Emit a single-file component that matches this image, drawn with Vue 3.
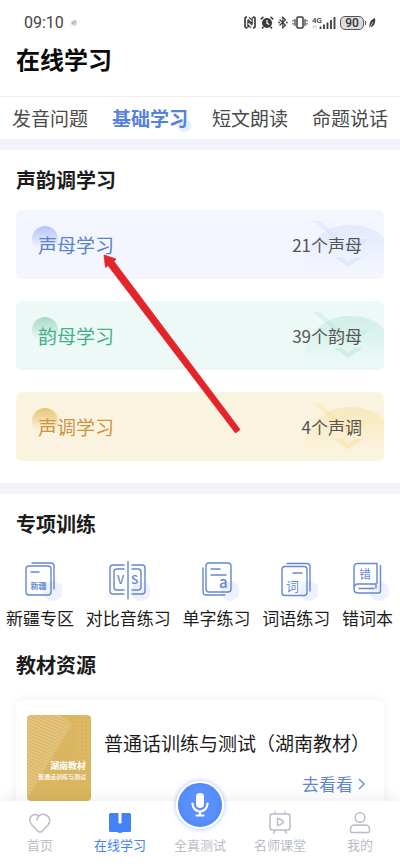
<script setup>
import { ref } from 'vue'

const tabs = ['发音问题', '基础学习', '短文朗读', '命题说话']
const activeTab = ref('基础学习')

const lessons = [
  { key: 'blue', name: '声母学习', count: '21个声母' },
  { key: 'green', name: '韵母学习', count: '39个韵母' },
  { key: 'gold', name: '声调学习', count: '4个声调' },
]

const drills = [
  { key: 'region', name: '新疆专区' },
  { key: 'versus', name: '对比音练习' },
  { key: 'letter', name: '单字练习' },
  { key: 'word', name: '词语练习' },
  { key: 'wrong', name: '错词本' },
]
</script>

<template>
  <div class="app">
    <div class="status">
      <span class="clock">09:10</span>
      <svg class="weather" width="8" height="8" viewBox="0 0 8 8">
        <circle cx="4" cy="4" r="3" fill="#d3d9da" />
        <path d="M2 3.500 4 4.500M4.500 1.500 6 3.500" stroke="#8d9799" stroke-width="1" />
      </svg>
      <div class="signals">
        <svg width="12" height="13" viewBox="0 0 12 13" fill="none" stroke="#3c3c3c">
          <path d="M3 1.200H2.300Q1 1.200 1 2.500v8q0 1.300 1.300 1.300H3M9 1.200h.7q1.300 0 1.300 1.300v8q0 1.300-1.300 1.300H9" stroke-width="1.700" />
          <path d="M3.800 12V5.200l4.400 4M8.200 1v6.500L3.800 3.500M5 1.500l3 2.700M4 9l3 2.700" stroke-width="1.100" />
        </svg>
        <svg width="14" height="13" viewBox="0 0 14 13">
          <circle cx="7" cy="7" r="5" fill="#3c3c3c" />
          <path d="M.8 3.400 3.400.9M13.200 3.400 10.600.9M3.500 10.700 2 12.500M10.500 10.700l1.500 1.800" stroke="#3c3c3c" stroke-width="1.500" fill="none" />
          <path d="M7 4v3.300l2.300 1.200" stroke="#fff" stroke-width="1.200" fill="none" />
        </svg>
        <svg width="10" height="13" viewBox="0 0 10 13" fill="none" stroke="#3c3c3c" stroke-width="1.200">
          <path d="m1.500 3.500 6 5.700-2.700 2.500V1.300l2.700 2.500-6 5.700" />
          <path d="M.3 6.500h1.600M8 6.500h1.700" stroke-width="1.500" />
        </svg>
        <svg width="16" height="13" viewBox="0 0 16 13" fill="none" stroke="#3c3c3c">
          <rect x="5" y="1" width="6" height="11" rx="1" stroke-width="1.500" />
          <path d="M3 3v7M13 3v7M1 4v1.500m0 1.500v1.500M15 4v1.500m0 1.500v1.500" stroke-width="1.200" />
        </svg>
        <svg class="cell" width="24" height="14" viewBox="0 0 24 14">
          <text x="0" y="7" font-size="8" font-weight="500" fill="#3c3c3c">4G</text>
          <path d="M1.500 9v3.500M4 9v3.500" stroke="#ccc" stroke-width="1.200" />
          <path d="M8.500 10.500V13M12 8.500V13M15.500 6.500V13M19 4V13M22.500 1v12" stroke="#3c3c3c" stroke-width="1.800" />
        </svg>
        <span class="battery">90</span>
        <svg class="leaf" width="8" height="12" viewBox="0 0 8 12">
          <path d="M7 1C3 2.500 1 5.500 1.500 10.500c4-.5 6.500-4 5.500-9.500Z" fill="#3c3c3c" />
          <path d="M1 12 5 5" stroke="#fff" stroke-width=".7" />
        </svg>
      </div>
    </div>

    <header class="header"><h1>在线学习</h1></header>

    <div class="tabs">
      <button
        v-for="tab in tabs"
        :key="tab"
        type="button"
        class="tab"
        :class="{ active: tab === activeTab }"
        @click="activeTab = tab"
      >
        <span>{{ tab }}</span>
      </button>
    </div>

    <main class="content">
      <section class="section lessons">
        <h2>声韵调学习</h2>
        <a v-for="lesson in lessons" :key="lesson.key" href="#" class="lesson" :class="lesson.key">
          <svg class="scene" width="80" height="60" viewBox="0 0 80 60">
            <defs>
              <linearGradient :id="'dome-' + lesson.key" x1="0" y1="0" x2="0" y2="1">
                <stop offset="0" stop-color="currentColor" stop-opacity=".38" />
                <stop offset=".85" stop-color="currentColor" stop-opacity="0" />
              </linearGradient>
            </defs>
            <path d="M1 60V36Q16 6 45 6q23 0 35 13v41Z" :fill="`url(#dome-${lesson.key})`" />
            <path d="M9 2h7l12 11 16 14 13-7h10L45 34 22 13Z" fill="currentColor" opacity=".26" />
            <path d="M30 38h8l6 5 7-5h8L44 48Z" fill="currentColor" opacity=".36" />
          </svg>
          <span class="name">{{ lesson.name }}</span>
          <span class="count">{{ lesson.count }}</span>
        </a>
        <svg class="pointer" width="138" height="180" viewBox="0 0 138 180">
          <path d="M1 1 13 5 11 7.500 137 175.500 132.500 179 5 11.500 2.500 13.500Z" fill="#e3242b" stroke="#e3242b" stroke-width=".8" />
        </svg>
      </section>

      <section class="section training">
        <h2>专项训练</h2>
        <div class="drills">
          <a v-for="drill in drills" :key="drill.key" href="#" class="drill">
            <svg class="glyph" width="44" height="40" viewBox="0 0 44 40" fill="none" stroke="#6488d2" stroke-width="1.400" stroke-linecap="round">
              <template v-if="drill.key === 'region'">
                <circle cx="35" cy="30" r="10" fill="#edf0fe" stroke="none" />
                <rect x="8" y="5" width="25" height="29" rx="3" />
                <path d="M14 2h19q3 0 3 3v23M13 11h8" />
                <text x="12.500" y="28" font-size="8" font-weight="700">新疆</text>
              </template>
              <template v-else-if="drill.key === 'versus'">
                <circle cx="35" cy="30" r="10" fill="#edf0fe" stroke="none" />
                <path d="M18 4H7Q4 4 4 7v23q0 3 3 3h11M26 4h10q3 0 3 3v23q0 3-3 3H26" />
                <path d="M18 8h-7Q8 8 8 11v15q0 3 3 3h7M26 8h6q3 0 3 3v15q0 3-3 3h-6M22 0v38" />
                <text x="11" y="23" font-size="12" font-weight="500">V</text>
                <text x="25" y="23" font-size="12" font-weight="500">S</text>
              </template>
              <template v-else-if="drill.key === 'letter'">
                <circle cx="35" cy="30" r="10" fill="#edf0fe" stroke="none" />
                <rect x="11" y="2" width="25" height="29" rx="3" />
                <path d="M8 7v23q0 4 3 4h19M16 8h9M16 14h15" />
                <text x="24" y="27" font-size="15" font-weight="500">a</text>
              </template>
              <template v-else-if="drill.key === 'word'">
                <circle cx="35" cy="30" r="10" fill="#edf0fe" stroke="none" />
                <rect x="8" y="5.500" width="25" height="29" rx="3" />
                <path d="M13 2.500h20q3 0 3 3V30M19 12h9" />
                <text x="12" y="30" font-size="13">词</text>
              </template>
              <template v-else>
                <circle cx="33" cy="30" r="10" fill="#edf0fe" stroke="none" />
                <path d="M31 22V2.500H12q-4 0-4 4V28q0 4 4 4h21q1.500 0 1.500-2V4.500M8 28q0-5 4-5h18v4M13 27.500h15" />
                <text x="13" y="17.500" font-size="12">错</text>
              </template>
            </svg>
            <span>{{ drill.name }}</span>
          </a>
        </div>

        <h2>教材资源</h2>
        <article class="book">
          <div class="cover">
            <svg class="pattern" width="64" height="86" viewBox="0 0 64 86">
              <defs>
                <pattern id="stripes" width="4" height="3" patternUnits="userSpaceOnUse" patternTransform="rotate(24)">
                  <path d="M0 1h4" stroke="#fff" stroke-opacity=".4" stroke-width="1" />
                </pattern>
                <pattern id="dots" width="4" height="4" patternUnits="userSpaceOnUse">
                  <circle cx="1" cy="1" r=".6" fill="#fff" fill-opacity=".35" />
                </pattern>
              </defs>
              <path d="M0 0h34l11 9L0 84Z" fill="url(#stripes)" />
              <path d="M48 0h16v44H50Z" fill="url(#dots)" />
            </svg>
            <strong>湖南教材</strong>
            <small>普通话训练与测试</small>
          </div>
          <div class="info">
            <h3>普通话训练与测试（湖南教材）</h3>
            <a href="#" class="more">
              去看看
              <svg width="8" height="12" viewBox="0 0 8 12" fill="none" stroke="#5f86d6" stroke-width="1.300">
                <path d="m1 1 5 5-5 5" />
              </svg>
            </a>
          </div>
        </article>
      </section>
    </main>

    <nav class="bar">
      <a href="#" class="item">
        <svg width="24" height="24" viewBox="0 0 24 24" fill="none" stroke="#b9bdc7" stroke-width="1.500" stroke-linecap="round" stroke-linejoin="round">
          <path d="M9 9c0-4 4.500-7 8.500-5.200 4.500 2 5.500 6.700 2.500 10.200L14 20.300q-2 1.500-4 0L4 14C.5 10.500 1 5.800 5 4q3-1.200 5.500.8" />
        </svg>
        <span>首页</span>
      </a>
      <a href="#" class="item active">
        <svg width="24" height="24" viewBox="0 0 24 24" fill="#4482fa">
          <path d="M2.500 2H10q.5 0 .5 1v9q1.500 1 3 0V3q0-1 .5-1h7.500Q23 2 23 3.500v16q0 1.500-1.500 1.500H15q-1 1-3 1t-3-1H2.500Q1 21 1 19.500v-16Q1 2 2.500 2Z" />
        </svg>
        <span>在线学习</span>
      </a>
      <a href="#" class="item">
        <span class="mic">
          <svg width="24" height="28" viewBox="0 0 24 28" fill="none" stroke="#fff" stroke-width="2.200" stroke-linecap="round">
            <rect x="8" y="2" width="8" height="15" rx="4" fill="#fff" stroke="none" />
            <path d="M4.500 12.500c0 10.500 15 10.500 15 0M12 20.500V24M8.500 24.500h7" />
          </svg>
        </span>
        <span>全真测试</span>
      </a>
      <a href="#" class="item">
        <svg width="24" height="24" viewBox="0 0 24 24" fill="none" stroke="#b9bdc7" stroke-width="1.500" stroke-linecap="round" stroke-linejoin="round">
          <rect x="2" y="3" width="20" height="16" rx="2.500" />
          <path d="M7 1v2M17 1v2M7 19.500 5.500 22M17 19.500l1.500 2.500M9.500 8q0-1 1-.6l4.500 2.600q1 1 0 2l-4.500 2.300q-1 .4-1-.6Z" />
        </svg>
        <span>名师课堂</span>
      </a>
      <a href="#" class="item">
        <svg width="24" height="24" viewBox="0 0 24 24" fill="none" stroke="#b9bdc7" stroke-width="1.500">
          <circle cx="12" cy="6.500" r="4.800" />
          <path d="M7 14h10q4.500 0 4.500 4v2q0 1.500-1.500 1.500H4Q2.500 21.500 2.500 20v-2q0-4 4.500-4Z" />
        </svg>
        <span>我的</span>
      </a>
    </nav>
  </div>
</template>

<style>
body {
  background: #fff;
}
</style>

<style scoped>
.app {
  display: flex;
  flex-direction: column;
  height: 100vh;
  overflow: hidden;
  background: #fff;
  color: #1c1c1c;
  font-family: "Noto Sans CJK SC", sans-serif;
}
a {
  color: inherit;
  text-decoration: none;
}
h1,
h2,
h3 {
  margin: 0;
}
.status {
  box-sizing: border-box;
  flex: none;
  display: flex;
  align-items: center;
  height: 43px;
  padding: 2px 24px 0;
}
.clock {
  font-family: Roboto, sans-serif;
  font-size: 16px;
  line-height: 20px;
  color: #444;
}
.weather {
  margin-left: 6px;
}
.signals {
  display: flex;
  align-items: center;
  gap: 4px;
  margin-left: auto;
}
.cell {
  font-family: Roboto, sans-serif;
}
.battery {
  position: relative;
  box-sizing: border-box;
  width: 24px;
  height: 14px;
  border: 1px solid #555;
  border-radius: 5px;
  background: #dcdcdc;
  font: 500 12px/12px Roboto, sans-serif;
  color: #333;
  text-align: center;
}
.battery::after {
  content: "";
  position: absolute;
  right: -3px;
  top: 4px;
  width: 1px;
  height: 4px;
  background: #555;
}
.header {
  flex: none;
  height: 53px;
  padding: 0 16px;
  border-bottom: 1px solid #efeff1;
}
h1 {
  font-size: 24px;
  line-height: 32px;
  font-weight: 700;
  color: #0a0a0a;
}
.tabs {
  flex: none;
  display: grid;
  grid-template-columns: repeat(4, 1fr);
  height: 42px;
}
.tab {
  padding: 0;
  border: 0;
  background: none;
  font-family: inherit;
  font-size: 19px;
  line-height: 28px;
  color: #4a4a4a;
  white-space: nowrap;
}
.tab span {
  position: relative;
  z-index: 0;
}
.tab.active {
  color: #5582dc;
  font-weight: 700;
}
.tab.active span::after {
  content: "";
  position: absolute;
  z-index: -1;
  right: -3px;
  bottom: -1px;
  width: 13px;
  height: 13px;
  border-radius: 50%;
  background: #e4ecfd;
}
.content {
  flex: 1;
  min-height: 0;
  overflow-y: auto;
  scrollbar-width: none;
}
.section {
  position: relative;
  border-top: 11px solid #f1f3f9;
}
h2 {
  padding: 0 16px;
  font-size: 20px;
  line-height: 28px;
  font-weight: 700;
}
.lessons {
  display: flex;
  flex-direction: column;
  gap: 22px;
  padding: 16px 0 22px;
}
.lessons h2 {
  margin-bottom: -6px;
}
.lesson {
  position: relative;
  display: flex;
  align-items: center;
  justify-content: space-between;
  height: 69px;
  margin: 0 16px;
  padding: 0 22px;
  border-radius: 6px;
  overflow: hidden;
}
.lesson::before {
  content: "";
  position: absolute;
  left: 16px;
  top: 16px;
  width: 26px;
  height: 26px;
  border-radius: 50%;
}
.name,
.count {
  position: relative;
}
.name {
  font-size: 19px;
  line-height: 28px;
}
.count {
  font-size: 17px;
  line-height: 24px;
  color: #555;
}
.scene {
  position: absolute;
  right: 0;
  bottom: 0;
}
.blue {
  background: #f3f6fe;
}
.blue .name {
  color: #5a82d2;
}
.blue::before {
  background: linear-gradient(#b4c5f3, #f3f6fe 90%);
}
.blue .scene {
  color: #c6d5fb;
}
.green {
  background: #ecf9f7;
}
.green .name {
  color: #43b088;
}
.green::before {
  background: linear-gradient(#a9d9c6, #ecf9f7 90%);
}
.green .scene {
  color: #a4dfcb;
}
.gold {
  background: #faf3e0;
}
.gold .name {
  color: #cf9443;
}
.gold::before {
  background: linear-gradient(#e5c673, #faf3e0 90%);
}
.gold .scene {
  color: #fad780;
}
.pointer {
  position: absolute;
  left: 103px;
  top: 104px;
}
.training {
  padding-top: 16px;
}
.drills {
  display: flex;
  justify-content: space-between;
  padding: 23px 7px 20px 6px;
}
.drill {
  display: flex;
  flex-direction: column;
  align-items: center;
  gap: 4px;
  font-size: 17px;
  line-height: 26px;
  white-space: nowrap;
}
.glyph text {
  fill: #6488d2;
  stroke: none;
}
.book {
  display: flex;
  gap: 13px;
  margin: 21px 16px 16px;
  padding: 15px 0 15px 11px;
  border-radius: 6px;
  background: #fff;
  box-shadow: 0 0 10px rgba(0, 0, 0, 0.07);
}
.cover {
  position: relative;
  box-sizing: border-box;
  flex: none;
  display: flex;
  flex-direction: column;
  align-items: flex-end;
  width: 64px;
  height: 86px;
  padding: 45px 5px 0 0;
  border-radius: 4px;
  overflow: hidden;
  background: #dab661;
  color: #fff;
  white-space: nowrap;
}
.pattern {
  position: absolute;
  left: 0;
  top: 0;
}
.cover strong {
  position: relative;
  font-size: 9px;
  line-height: 12px;
}
.cover small {
  position: relative;
  font-size: 6px;
  line-height: 9px;
  font-weight: 500;
}
.info {
  flex: 1;
  min-width: 0;
  display: flex;
  flex-direction: column;
  justify-content: space-between;
  padding: 14px 0 5px;
}
h3 {
  font-size: 19px;
  line-height: 28px;
  font-weight: 400;
  white-space: nowrap;
}
.more {
  display: flex;
  align-items: center;
  justify-content: flex-end;
  gap: 5px;
  padding-right: 18px;
  font-size: 17px;
  line-height: 24px;
  color: #5f86d6;
}
.bar {
  position: relative;
  flex: none;
  display: grid;
  grid-template-columns: repeat(5, 1fr);
  height: 65px;
  background: #fff;
  box-shadow: 0 -2px 14px rgba(0, 0, 0, 0.07);
}
.item {
  position: relative;
  display: flex;
  flex-direction: column;
  align-items: center;
  justify-content: flex-end;
  padding-bottom: 11px;
  font-size: 13px;
  line-height: 20px;
  color: #b9bdc7;
}
.item.active {
  color: #4482fa;
}
.mic {
  position: absolute;
  top: -20px;
  display: flex;
  align-items: center;
  justify-content: center;
  width: 44px;
  height: 44px;
  border: 2px solid #fff;
  border-radius: 50%;
  background: radial-gradient(#5b90fc 50%, #4f89fb 70%);
  box-shadow: 0 0 5px rgba(68, 130, 250, 0.5);
}
</style>
